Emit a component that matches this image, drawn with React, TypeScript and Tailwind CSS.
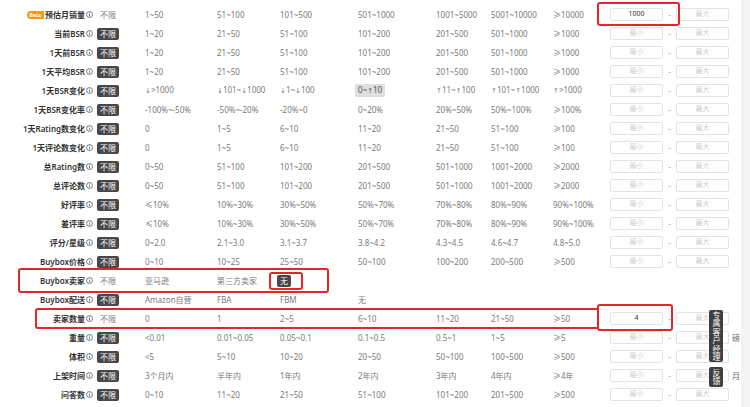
import React from 'react';

type Row = {
    label: string;
    beta?: boolean;
    any: 'badge' | 'plain';
    values: string[];
    selected?: number;
    highlight?: number;
    inputs?: boolean;
    min?: string;
    unit?: string;
};

const BSR = ['1~20', '21~50', '51~100', '101~200', '201~500', '501~1000', '≥1000'];
const RATING = ['0~50', '51~100', '101~200', '201~500', '501~1000', '1001~2000', '≥2000'];
const RATE = ['≤10%', '10%~30%', '30%~50%', '50%~70%', '70%~80%', '80%~90%', '90%~100%'];

const rows: Row[] = [
    { label: '预估月销量', beta: true, any: 'plain', values: ['1~50', '51~100', '101~500', '501~1000', '1001~5000', '5001~10000', '≥10000'], inputs: true, min: '1000' },
    { label: '当前BSR', any: 'badge', values: BSR, inputs: true },
    { label: '1天前BSR', any: 'badge', values: BSR, inputs: true },
    { label: '1天平均BSR', any: 'badge', values: BSR, inputs: true },
    { label: '1天BSR变化', any: 'badge', values: ['↓>1000', '↓101~↓1000', '↓1~↓100', '0~↑10', '↑11~↑100', '↑101~↑1000', '↑>1000'], highlight: 3, inputs: true },
    { label: '1天BSR变化率', any: 'badge', values: ['-100%~-50%', '-50%~-20%', '-20%~0', '0~20%', '20%~50%', '50%~100%', '≥100%'], inputs: true },
    { label: '1天Rating数变化', any: 'badge', values: ['0', '1~5', '6~10', '11~20', '21~50', '51~100', '≥100'], inputs: true },
    { label: '1天评论数变化', any: 'badge', values: ['0', '1~5', '6~10', '11~20', '21~50', '51~100', '≥100'], inputs: true },
    { label: '总Rating数', any: 'badge', values: RATING, inputs: true },
    { label: '总评论数', any: 'badge', values: RATING, inputs: true },
    { label: '好评率', any: 'badge', values: RATE, inputs: true },
    { label: '差评率', any: 'badge', values: RATE, inputs: true },
    { label: '评分/星级', any: 'badge', values: ['0~2.0', '2.1~3.0', '3.1~3.7', '3.8~4.2', '4.3~4.5', '4.6~4.7', '4.8~5.0'], inputs: true },
    { label: 'Buybox价格', any: 'badge', values: ['0~10', '10~25', '25~50', '50~100', '100~200', '200~500', '≥500'], inputs: true },
    { label: 'Buybox卖家', any: 'plain', values: ['亚马逊', '第三方卖家', '无'], selected: 2 },
    { label: 'Buybox配送', any: 'badge', values: ['Amazon自营', 'FBA', 'FBM', '无'] },
    { label: '卖家数量', any: 'plain', values: ['0', '1', '2~5', '6~10', '11~20', '21~50', '≥50'], inputs: true, min: '4' },
    { label: '重量', any: 'badge', values: ['<0.01', '0.01~0.05', '0.05~0.1', '0.1~0.5', '0.5~1', '1~5', '≥5'], inputs: true, unit: '磅' },
    { label: '体积', any: 'badge', values: ['<5', '5~10', '10~20', '20~50', '50~100', '100~500', '≥500'], inputs: true },
    { label: '上架时间', any: 'badge', values: ['3个月内', '半年内', '1年内', '2年内', '3年内', '4年内', '≥4年'], inputs: true, unit: '月' },
    { label: '问答数', any: 'badge', values: ['0~10', '11~20', '21~50', '51~100', '101~200', '201~500', '≥500'], inputs: true },
];

const Info = () => (
    <svg viewBox="0 0 10 10" className="w-[7px] h-[7px] ml-[1px] shrink-0">
        <circle cx="5" cy="5" r="4.2" fill="none" stroke="#444" strokeWidth="1" />
        <rect x="4.5" y="4.2" width="1" height="3.3" fill="#444" />
        <rect x="4.5" y="2.4" width="1" height="1" fill="#444" />
    </svg>
);

// arrows get their own plain font so they never fall back to a colour glyph
const withArrows = (text: string) =>
    text.split(/([↓↑])/).map((part, i) =>
        part === '↓' || part === '↑' ? (
            <span key={i} style={{ fontFamily: '"DejaVu Sans", sans-serif' }} className="text-[7px]">
                {part}
            </span>
        ) : (
            <React.Fragment key={i}>{part}</React.Fragment>
        )
    );

const Chip: React.FC<{ text: string; active?: boolean; soft?: boolean }> = ({ text, active, soft }) => (
    <span
        className={
            'inline-block px-[3px] -ml-[3px] leading-[12px] rounded-[2px] whitespace-nowrap ' +
            (active ? 'bg-[#474747] text-white' : soft ? 'bg-[#dedede] text-[#555]' : 'text-[#7a7a7a]')
        }
    >
        {withArrows(text)}
    </span>
);

const Box: React.FC<{ value?: string; placeholder: string }> = ({ value, placeholder }) => (
    <div className="h-[13px] w-[53px] border border-[#e3e3e3] rounded-[2px] bg-white flex items-center justify-center text-[7px]">
        {value ? <span className="text-[#333]">{value}</span> : <span className="text-[#cfcfcf]">{placeholder}</span>}
    </div>
);

const App: React.FC = () => {
    return (
        <div
            className="relative w-[750px] h-[407px] overflow-hidden flex bg-white"
            style={{ fontFamily: '"Noto Sans", "Noto Sans CJK SC", sans-serif' }}
        >
            {/* Filter table */}
            <div className="w-[741px] pt-[5px] text-[8px]">
                {rows.map((row) => (
                    <div
                        key={row.label}
                        className="h-[19px] grid grid-cols-[93px_52px_72px_63px_78px_78px_55px_62px_57px_53px_13px_53px_1fr] items-center"
                    >
                        <div className="flex items-center justify-end text-[8px] font-semibold text-[#333] whitespace-nowrap">
                            {row.beta && (
                                <span className="mr-[1px] bg-[#f39a1e] text-white text-[5px] font-bold leading-[8px] px-[3px] rounded-l-full rounded-r-[5px]">
                                    Beta
                                </span>
                            )}
                            {row.label}
                            <Info />
                        </div>
                        <div className="pl-[7px]">
                            <Chip text="不限" active={row.any === 'badge'} />
                        </div>
                        {Array.from({ length: 7 }).map((_, i) => (
                            <div key={i}>
                                {row.values[i] && (
                                    <Chip text={row.values[i]} active={row.selected === i} soft={row.highlight === i} />
                                )}
                            </div>
                        ))}
                        {row.inputs ? (
                            <>
                                <Box value={row.min} placeholder="最小" />
                                <div className="text-center text-[#aaa] text-[8px]">-</div>
                                <Box placeholder="最大" />
                                <div className="pl-[3px] text-[8px] text-[#666]">{row.unit}</div>
                            </>
                        ) : (
                            <div className="col-span-4" />
                        )}
                    </div>
                ))}
            </div>
            <div className="flex-1 bg-[#f3f3f3]" />

            {/* Annotation boxes */}
            <div className="absolute left-[597px] top-[2px] w-[83px] h-[24px] border-2 border-[#e3262b] rounded-[3px]" />
            <div className="absolute left-[18px] top-[268px] w-[311px] h-[25px] border-2 border-[#e3262b] rounded-[3px]" />
            <div className="absolute left-[269px] top-[272px] w-[34px] h-[18px] border-2 border-[#e3262b] rounded-[3px]" />
            <div className="absolute left-[35px] top-[308px] w-[564px] h-[21px] border-2 border-r-0 border-[#e3262b] rounded-l-[3px]" />
            <div className="absolute left-[597px] top-[304px] w-[76px] h-[27px] border-2 border-[#e3262b] rounded-[3px]" />

            {/* Floating side widgets */}
            <div className="absolute left-[709px] top-[310px] w-[14px] h-[52px] bg-[#3f3f3f] rounded-[2px] flex items-center justify-center">
                <span className="[writing-mode:vertical-rl] [text-orientation:upright] text-white text-[8px] leading-[14px] tracking-[0.4px]">
                    专属客户经理
                </span>
            </div>
            <div className="absolute left-[709px] top-[367px] w-[14px] h-[20px] bg-[#3f3f3f] rounded-[2px] flex items-center justify-center">
                <span className="[writing-mode:vertical-rl] [text-orientation:upright] text-white text-[8px] leading-[14px] tracking-[0.4px]">
                    反馈
                </span>
            </div>
        </div>
    );
};

export default App;
